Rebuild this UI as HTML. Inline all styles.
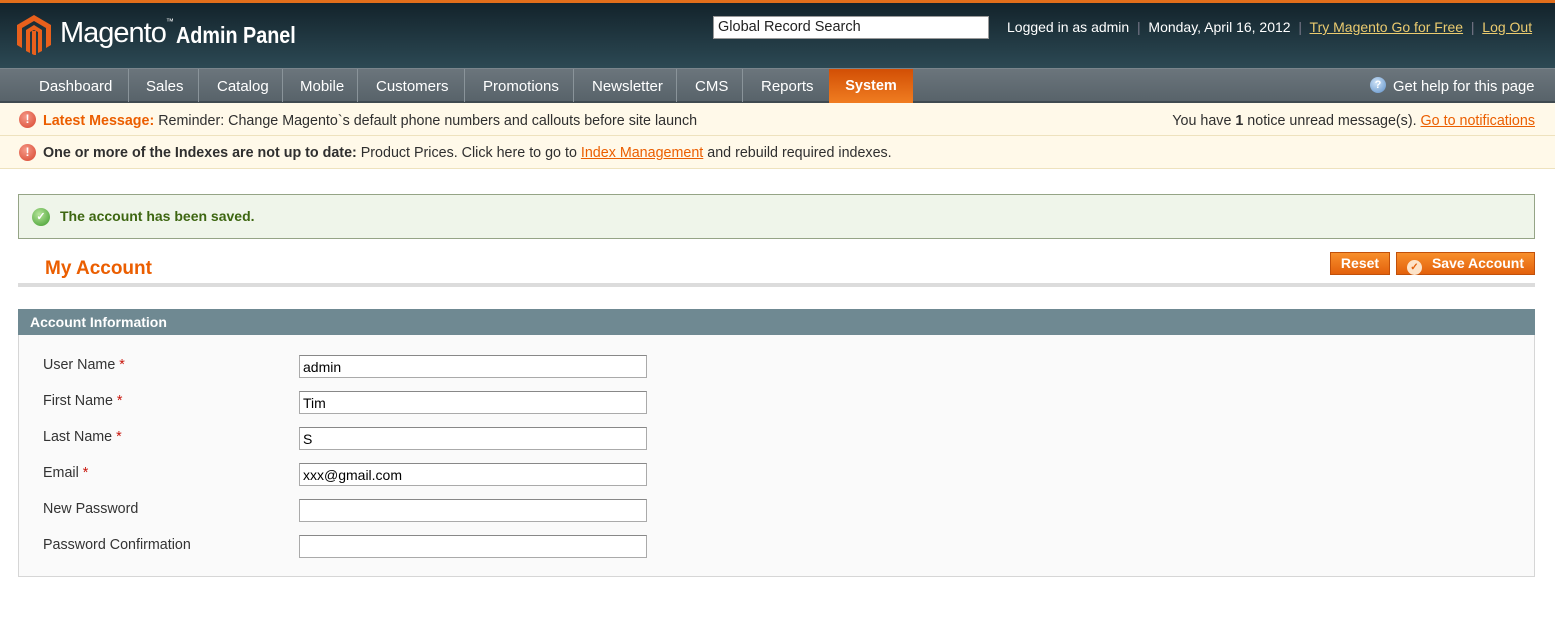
<!DOCTYPE html>
<html><head><meta charset="utf-8"><style>
*{margin:0;padding:0;box-sizing:border-box}
body{width:1555px;height:623px;background:#fff;font-family:"Liberation Sans",Arial,sans-serif;font-size:14px;color:#2f2f2f;position:relative;overflow:hidden}
.abs{position:absolute}
#top{left:0;top:0;width:1555px;height:3px;background:#e26e1b}
#hdr{left:0;top:3px;width:1555px;height:65px;background:linear-gradient(#13232b,#2c4954)}
#nav{left:0;top:68px;width:1555px;height:35px;background:linear-gradient(#6b757c,#58636a);border-top:1px solid #7a858c;border-bottom:2px solid #3f4a50}
.ni{position:absolute;top:0;height:33px;line-height:35px;color:#fff;font-size:15px;border-left:1px solid #8a949a}
.msg{left:0;width:1555px;background:#fff9e9;border-bottom:1px solid #eee2be;font-size:14.3px;line-height:32px}
.ico{position:absolute;left:19px;top:8px;width:17px;height:17px;border-radius:50%;background:radial-gradient(circle at 40% 35%,#f59a88,#d7432c);color:#fff;font-size:12px;font-weight:bold;text-align:center;line-height:17px}
a{color:#eb5e00;text-decoration:underline}
input.f{position:absolute;left:299px;width:348px;height:23px;border:1px solid #aaa;border-top-color:#888;font-family:"Liberation Sans",Arial,sans-serif;font-size:14px;padding:2px 3px;background:#fff}
.lb{position:absolute;left:43px;font-size:14.3px;color:#333}
.lb b{color:#c8140a;font-weight:normal}
.btn{position:absolute;top:252px;height:23px;background:linear-gradient(#f88f2c,#e3610c);border:1px solid #c1500a;color:#fff;font-weight:bold;font-size:14px;line-height:21px;text-align:center}
</style></head><body>
<div class="abs" id="top"></div>
<div class="abs" id="hdr">
 <svg class="abs" style="left:17px;top:12px" width="34" height="40" viewBox="0 0 34 40"><path d="M17 0 L34 10 V30 L29 33 V13 L17 6 L5 13 V33 L0 30 V10 Z" fill="#e8601c"/><path d="M9 15 L17 10 L25 15 V36 L21 38 V17 L17 15 L13 17 V38 L9 36 Z" fill="#e8601c"/><path d="M15 16 h4 v24 l-2 0 l-2 -1z" fill="#e8601c"/></svg>
 <div class="abs" style="left:60px;top:14px;color:#fff;font-size:29px;letter-spacing:-1px;white-space:nowrap">Magento<span style="font-size:8px;vertical-align:top;letter-spacing:0">™</span></div>
 <div class="abs" style="left:176px;top:19px;color:#fff;font-size:23px;font-weight:bold;white-space:nowrap;transform:scaleX(0.86);transform-origin:left">Admin Panel</div>
 <div class="abs" style="left:713px;top:13px;width:276px;height:23px;background:#fff;border:1px solid #999;color:#222;font-size:14.5px;line-height:21px;padding-left:4px">Global Record Search</div>
 <div class="abs" style="left:1007px;top:16px;color:#fff;font-size:14px;white-space:nowrap">Logged in as admin <span style="color:#778">&nbsp;|&nbsp;</span> Monday, April 16, 2012 <span style="color:#778">&nbsp;|&nbsp;</span> <a style="color:#ebcb6f">Try Magento Go for Free</a> <span style="color:#778">&nbsp;|&nbsp;</span> <a style="color:#ebcb6f">Log Out</a></div>
</div>
<div class="abs" id="nav">
 <div class="ni" style="left:39px;border:none">Dashboard</div>
 <div class="ni" style="left:128px;padding-left:17px">Sales</div>
 <div class="ni" style="left:198px;padding-left:18px">Catalog</div>
 <div class="ni" style="left:282px;padding-left:17px">Mobile</div>
 <div class="ni" style="left:357px;padding-left:18px">Customers</div>
 <div class="ni" style="left:464px;padding-left:18px">Promotions</div>
 <div class="ni" style="left:573px;padding-left:18px">Newsletter</div>
 <div class="ni" style="left:676px;padding-left:18px">CMS</div>
 <div class="ni" style="left:742px;padding-left:18px">Reports</div>
 <div class="ni" style="left:829px;width:84px;top:0;height:34px;background:linear-gradient(#d24f05,#f07d21);font-weight:bold;text-align:center;border:none;line-height:34px;font-size:14.5px">System</div>
 <div class="abs" style="left:1370px;top:8px;width:16px;height:16px;border-radius:50%;background:radial-gradient(circle at 40% 35%,#cfe3f7,#5c8fc8);color:#fff;font-size:11px;font-weight:bold;text-align:center;line-height:16px">?</div>
 <div class="abs" style="left:1393px;top:1px;line-height:34px;color:#fff;font-size:14.8px">Get help for this page</div>
</div>
<div class="abs msg" style="top:103px;height:33px"><div class="ico">!</div>
 <div class="abs" style="left:43px;top:2px;white-space:nowrap"><b style="color:#eb5e00">Latest Message:</b> Reminder: Change Magento`s default phone numbers and callouts before site launch</div>
 <div class="abs" style="right:20px;top:2px;white-space:nowrap">You have <b>1</b> notice unread message(s). <a>Go to notifications</a></div></div>
<div class="abs msg" style="top:136px;height:33px"><div class="ico">!</div>
 <div class="abs" style="left:43px;top:1px;white-space:nowrap"><b>One or more of the Indexes are not up to date:</b> Product Prices. Click here to go to <a>Index Management</a> and rebuild required indexes.</div></div>
<div class="abs" style="left:18px;top:194px;width:1517px;height:45px;background:#eff5ea;border:1px solid #95a486">
 <div class="abs" style="left:13px;top:13px;width:18px;height:18px;border-radius:50%;background:radial-gradient(circle at 40% 35%,#b7e59b,#3c9a2a);color:#fff;font-size:11px;text-align:center;line-height:18px;font-weight:bold">✓</div>
 <div class="abs" style="left:41px;top:13px;color:#3d6611;font-weight:bold;font-size:14px">The account has been saved.</div></div>
<div class="abs" style="left:45px;top:258px;color:#eb5e00;font-weight:bold;font-size:19px">My Account</div>
<div class="btn" style="left:1330px;width:60px">Reset</div>
<div class="btn" style="left:1396px;width:139px"><span style="display:inline-block;width:15px;height:15px;border-radius:50%;background:#fde3c8;color:#e3610c;font-size:10px;line-height:15px;vertical-align:-2px;margin-right:10px">✓</span>Save Account</div>
<div class="abs" style="left:18px;top:283px;width:1517px;height:4px;background:#dcdcdc"></div>
<div class="abs" style="left:18px;top:309px;width:1517px;height:26px;background:#6f8992;color:#fff;font-weight:bold;font-size:14px;line-height:26px;padding-left:12px">Account Information</div>
<div class="abs" style="left:18px;top:335px;width:1517px;height:242px;background:#fafafa;border:1px solid #d6d6d6;border-top:none"></div>
<div class="lb" style="top:357px">User Name <b>*</b></div><input class="f" style="top:355px" value="admin">
<div class="lb" style="top:393px">First Name <b>*</b></div><input class="f" style="top:391px" value="Tim">
<div class="lb" style="top:429px">Last Name <b>*</b></div><input class="f" style="top:427px" value="S">
<div class="lb" style="top:465px">Email <b>*</b></div><input class="f" style="top:463px" value="xxx@gmail.com">
<div class="lb" style="top:501px">New Password</div><input class="f" style="top:499px" value="">
<div class="lb" style="top:537px">Password Confirmation</div><input class="f" style="top:535px" value="">
</body></html>
